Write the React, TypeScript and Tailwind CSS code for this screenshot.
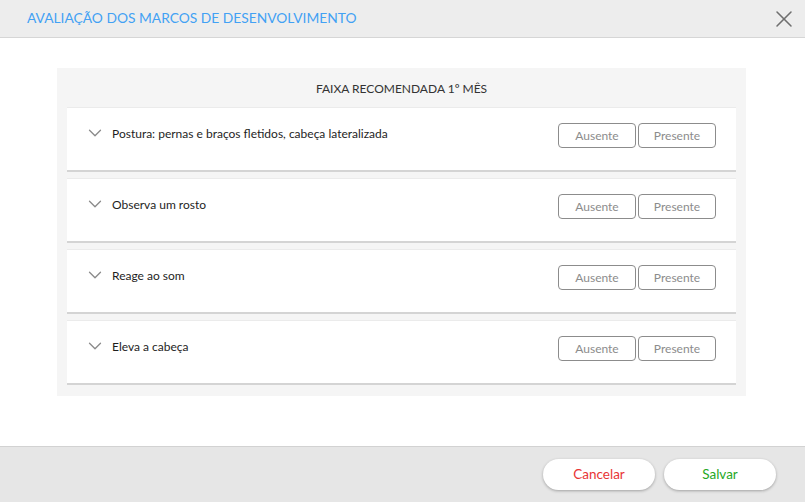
import { X, ChevronDown } from "lucide-react";

const marcos = [
  "Postura: pernas e braços fletidos, cabeça lateralizada",
  "Observa um rosto",
  "Reage ao som",
  "Eleva a cabeça",
];

function MarcoCard({ titulo }: { titulo: string }) {
  return (
    <div className="h-[65px] bg-white border-t border-[#ebebeb] border-b-2 border-b-[#d4d4d4] pt-[15px] pl-[17px] pr-[20px]">
      <div className="flex items-center h-[25px]">
        <ChevronDown className="w-[22px] h-[22px] text-[#8a8a8a] -mt-[5px]" strokeWidth={1.4} />
        <span className="ml-[6px] -mt-[3px] text-[12px] text-[#1e1e1e]">{titulo}</span>
        <div className="ml-auto flex gap-[2px]">
          <button className="w-[78px] h-[25px] rounded-[4px] border border-[#8c8c8c] text-[12px] text-[#8c8c8c] bg-white">
            Ausente
          </button>
          <button className="w-[78px] h-[25px] rounded-[4px] border border-[#8c8c8c] text-[12px] text-[#8c8c8c] bg-white">
            Presente
          </button>
        </div>
      </div>
    </div>
  );
}

export default function App() {
  return (
    <div
      className="w-[805px] h-[502px] flex flex-col bg-white"
      style={{ fontFamily: "Lato, 'Noto Sans', sans-serif" }}
    >
      <div className="h-[38px] shrink-0 bg-[#ededed] border-b border-[#d6d6d6] flex items-center pl-[27px] pr-[7px]">
        <span className="text-[13.8px] text-[#42a1f4] uppercase">
          Avaliação dos marcos de desenvolvimento
        </span>
        <X className="ml-auto w-[28px] h-[28px] text-[#6f6f6f]" strokeWidth={1.3} />
      </div>

      <div className="flex-1 pt-[30px] pl-[57px] pr-[59px]">
        <div className="bg-[#f5f5f5] px-[10px] pt-[12px] pb-[11px]">
          <div className="text-center text-[12px] leading-[18px] text-[#333] uppercase mb-[9px]">
            Faixa recomendada 1º mês
          </div>
          <div className="flex flex-col gap-[6px]">
            {marcos.map((m) => (
              <MarcoCard key={m} titulo={m} />
            ))}
          </div>
        </div>
      </div>

      <div className="h-[56px] shrink-0 bg-[#e6e6e6] border-t border-[#d2d2d2] flex items-center justify-end gap-[9px] pr-[29px]">
        <button className="w-[112px] h-[31px] rounded-full bg-white shadow-[0_1px_3px_rgba(0,0,0,0.3)] text-[13.5px] text-[#e83535]">
          Cancelar
        </button>
        <button className="w-[112px] h-[31px] rounded-full bg-white shadow-[0_1px_3px_rgba(0,0,0,0.3)] text-[13.5px] text-[#25a825]">
          Salvar
        </button>
      </div>
    </div>
  );
}
